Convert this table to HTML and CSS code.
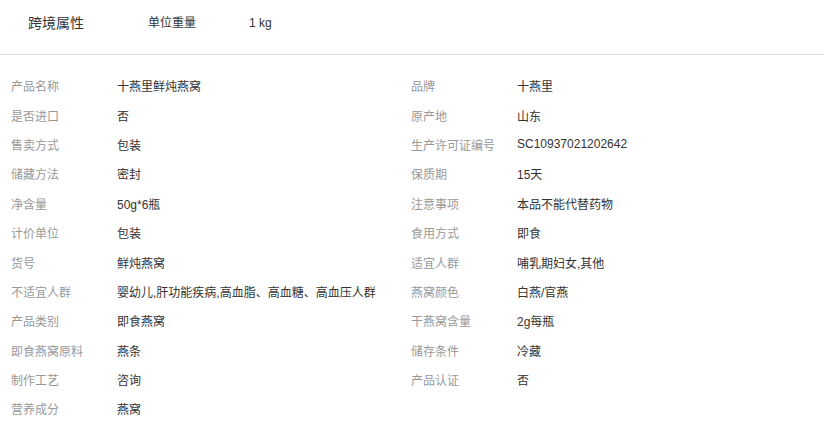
FILE: index.html
```html
<!DOCTYPE html>
<html lang="zh-CN">

<head>
  <meta charset="UTF-8">
  <title>商品参数</title>
  <link rel="stylesheet" href="styles.css">
</head>

<body>
  <div class="cross-border">
    <span class="cb-title">跨境属性</span>
    <span class="cb-label">单位重量</span>
    <span class="cb-value">1 kg</span>
  </div>

  <ul class="attr-list">
    <li><span class="attr-name">产品名称</span><span class="attr-value">十燕里鲜炖燕窝</span></li>
    <li><span class="attr-name">品牌</span><span class="attr-value">十燕里</span></li>
    <li><span class="attr-name">是否进口</span><span class="attr-value">否</span></li>
    <li><span class="attr-name">原产地</span><span class="attr-value">山东</span></li>
    <li><span class="attr-name">售卖方式</span><span class="attr-value">包装</span></li>
    <li><span class="attr-name">生产许可证编号</span><span class="attr-value">SC10937021202642</span></li>
    <li><span class="attr-name">储藏方法</span><span class="attr-value">密封</span></li>
    <li><span class="attr-name">保质期</span><span class="attr-value">15天</span></li>
    <li><span class="attr-name">净含量</span><span class="attr-value">50g*6瓶</span></li>
    <li><span class="attr-name">注意事项</span><span class="attr-value">本品不能代替药物</span></li>
    <li><span class="attr-name">计价单位</span><span class="attr-value">包装</span></li>
    <li><span class="attr-name">食用方式</span><span class="attr-value">即食</span></li>
    <li><span class="attr-name">货号</span><span class="attr-value">鲜炖燕窝</span></li>
    <li><span class="attr-name">适宜人群</span><span class="attr-value">哺乳期妇女,其他</span></li>
    <li><span class="attr-name">不适宜人群</span><span class="attr-value">婴幼儿,肝功能疾病,高血脂、高血糖、高血压人群</span></li>
    <li><span class="attr-name">燕窝颜色</span><span class="attr-value">白燕/官燕</span></li>
    <li><span class="attr-name">产品类别</span><span class="attr-value">即食燕窝</span></li>
    <li><span class="attr-name">干燕窝含量</span><span class="attr-value">2g每瓶</span></li>
    <li><span class="attr-name">即食燕窝原料</span><span class="attr-value">燕条</span></li>
    <li><span class="attr-name">储存条件</span><span class="attr-value">冷藏</span></li>
    <li><span class="attr-name">制作工艺</span><span class="attr-value">咨询</span></li>
    <li><span class="attr-name">产品认证</span><span class="attr-value">否</span></li>
    <li><span class="attr-name">营养成分</span><span class="attr-value">燕窝</span></li>
  </ul>
</body>

</html>
```

FILE: styles.css
```css
body {
  margin: 0;
  padding: 0;
  background-color: #fff;
  color: #333;
  font-family: "Liberation Sans", "Noto Sans CJK SC", sans-serif;
  font-size: 12px;
}

.cross-border {
  display: flex;
  align-items: center;
  height: 40px;
  padding: 3px 0 11px 28px;
  border-bottom: 1px solid #e5e5e5;
  line-height: 18px;
}

.cb-title {
  width: 120px;
  font-size: 14px;
  color: #333;
}

.cb-label {
  width: 101px;
  color: #333;
}

.cb-value {
  color: #333;
}

.attr-list {
  list-style: none;
  margin: 0;
  padding: 16px 0 0 0;
  display: grid;
  grid-template-columns: 400px 400px;
  grid-auto-rows: 29.4px;
}

.attr-list li {
  display: flex;
  align-items: center;
  padding-left: 11px;
}

.attr-name {
  width: 106px;
  flex-shrink: 0;
  color: #999;
}

.attr-value {
  color: #333;
  white-space: nowrap;
}
```
